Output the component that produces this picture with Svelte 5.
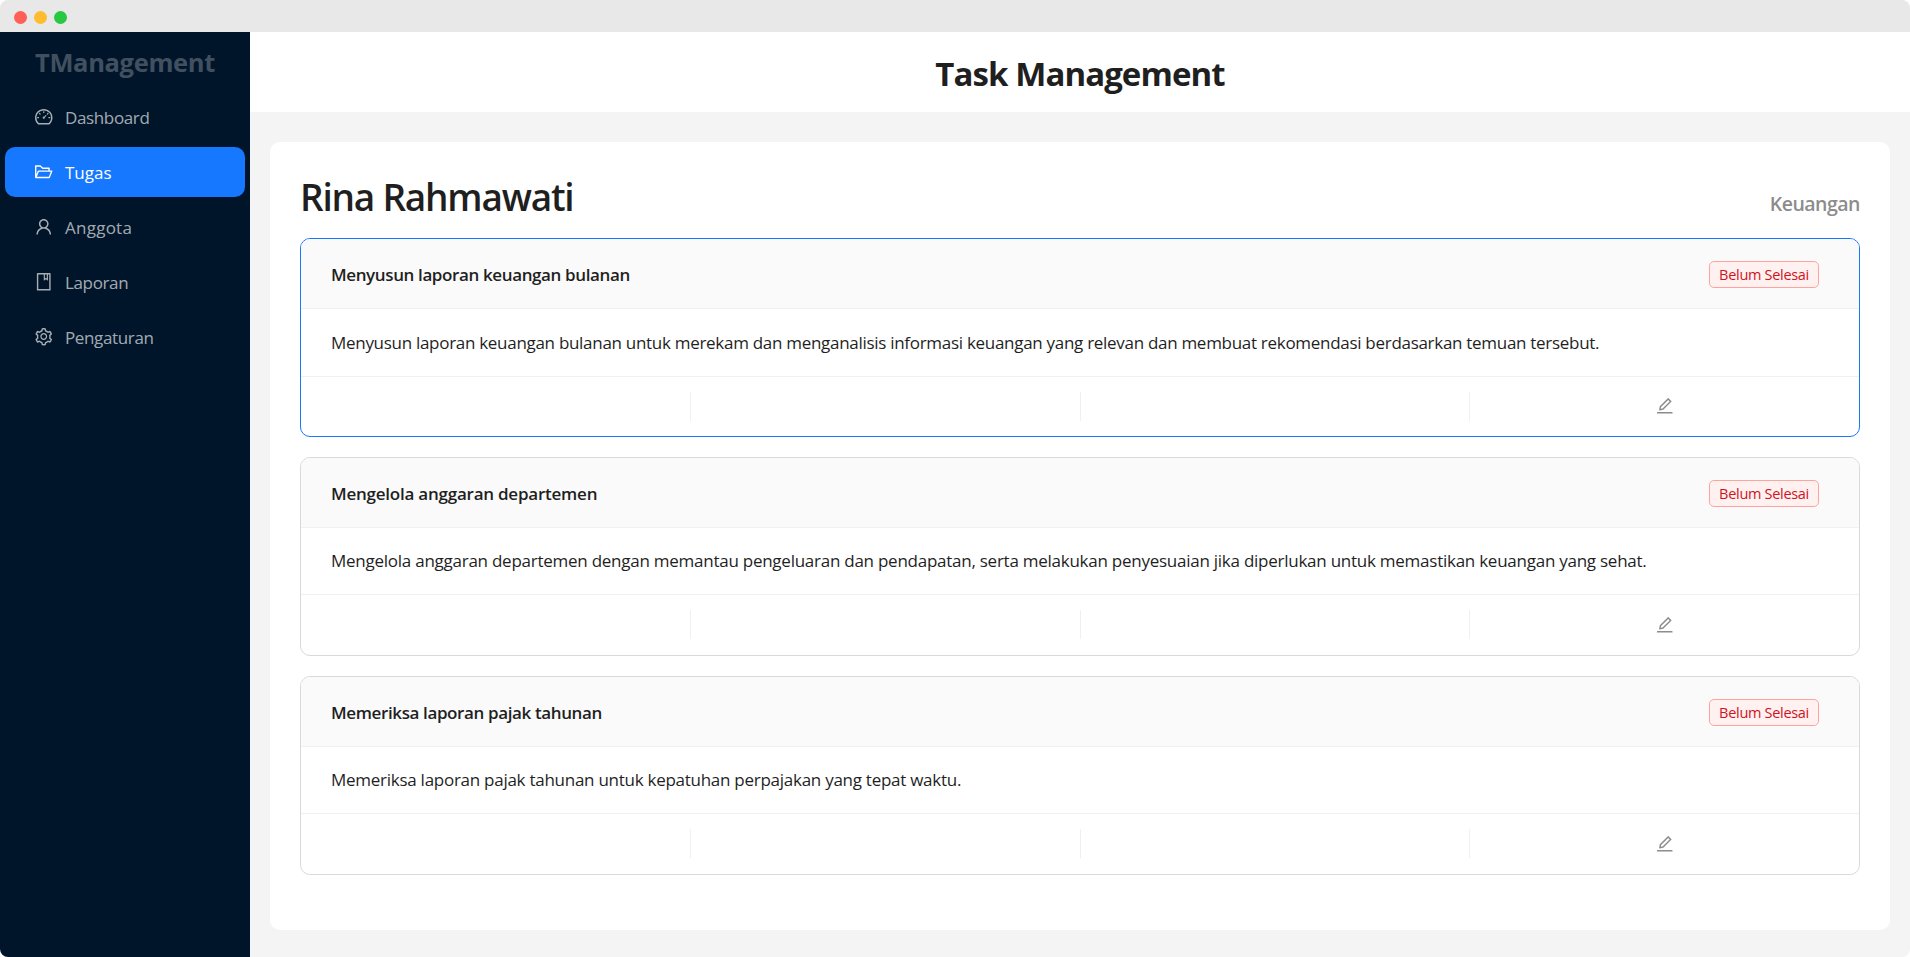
<script>
  const icons = {
    dashboard: 'M924.8 385.6a446.7 446.7 0 00-96-142.4 446.7 446.7 0 00-142.4-96C631.1 123.8 572.5 112 512 112s-119.1 11.8-174.4 35.2a446.7 446.7 0 00-142.4 96 446.7 446.7 0 00-96 142.4C75.8 440.9 64 499.5 64 560c0 132.7 58.3 257.7 159.9 343.1l1.7 1.4c5.8 4.8 13.1 7.5 20.6 7.5h531.7c7.5 0 14.8-2.7 20.6-7.5l1.7-1.4C901.7 817.7 960 692.7 960 560c0-60.5-11.9-119.1-35.2-174.4zM761.4 836H262.6A371.12 371.12 0 01140 560c0-99.4 38.7-192.8 109-263 70.3-70.3 163.7-109 263-109 99.4 0 192.8 38.7 263 109 70.3 70.3 109 163.7 109 263 0 105.6-44.5 205.5-122.6 276zM623.5 421.5a8.03 8.03 0 00-11.3 0L527.7 506c-18.7-5-39.4-.2-54.1 14.5a55.95 55.95 0 000 79.2 55.95 55.95 0 0079.2 0 55.87 55.87 0 0014.5-54.1l84.5-84.5c3.1-3.1 3.1-8.2 0-11.3l-28.3-28.3zM490 320h44c4.4 0 8-3.6 8-8v-80c0-4.4-3.6-8-8-8h-44c-4.4 0-8 3.6-8 8v80c0 4.4 3.6 8 8 8zm260 218v44c0 4.4 3.6 8 8 8h80c4.4 0 8-3.6 8-8v-44c0-4.4-3.6-8-8-8h-80c-4.4 0-8 3.6-8 8zm12.7-197.2l-31.1-31.1a8.03 8.03 0 00-11.3 0l-56.6 56.6a8.03 8.03 0 000 11.3l31.1 31.1c3.1 3.1 8.2 3.1 11.3 0l56.6-56.6c3.1-3.1 3.1-8.2 0-11.3zm-458.6-31.1a8.03 8.03 0 00-11.3 0l-31.1 31.1a8.03 8.03 0 000 11.3l56.6 56.6c3.1 3.1 8.2 3.1 11.3 0l31.1-31.1c3.1-3.1 3.1-8.2 0-11.3l-56.6-56.6zM262 530h-80c-4.4 0-8 3.6-8 8v44c0 4.4 3.6 8 8 8h80c4.4 0 8-3.6 8-8v-44c0-4.4-3.6-8-8-8z',
    folder: 'M928 444H820V330.4c0-17.7-14.3-32-32-32H473L355.7 186.2a8.15 8.15 0 00-5.5-2.2H96c-17.7 0-32 14.3-32 32v592c0 17.7 14.3 32 32 32h698c13 0 24.8-7.9 29.7-20l134-332c1.5-3.8 2.3-7.9 2.3-12 0-17.7-14.3-32-32-32zM136 256h188.5l119.6 114.4H748V444H238c-13 0-24.8 7.9-29.7 20L136 643.2V256zm635.3 512H159l103.3-256h612.4L771.3 768z',
    user: 'M858.5 763.6a374 374 0 00-80.6-119.5 375.63 375.63 0 00-119.5-80.6c-.4-.2-.8-.3-1.2-.5C719.5 518 760 444.7 760 362c0-137-111-248-248-248S264 225 264 362c0 82.7 40.5 156 102.8 201.1-.4.2-.8.3-1.2.5-44.8 18.9-85 46-119.5 80.6a375.63 375.63 0 00-80.6 119.5A371.7 371.7 0 00136 901.8a8 8 0 008 8.2h60c4.4 0 7.9-3.5 8-7.8 2-77.2 33-149.5 87.8-204.3 56.7-56.7 132-87.9 212.2-87.9s155.5 31.2 212.2 87.9C779 752.7 810 825 812 902.2c.1 4.4 3.6 7.8 8 7.8h60a8 8 0 008-8.2c-1-47.8-10.9-94.3-29.5-138.2zM512 534c-45.9 0-89.1-17.9-121.6-50.4S340 407.9 340 362c0-45.9 17.9-89.1 50.4-121.6S466.1 190 512 190s89.1 17.9 121.6 50.4S684 316.1 684 362c0 45.9-17.9 89.1-50.4 121.6S557.9 534 512 534z',
    book: 'M832 64H192c-17.7 0-32 14.3-32 32v832c0 17.7 14.3 32 32 32h640c17.7 0 32-14.3 32-32V96c0-17.7-14.3-32-32-32zm-260 72h96v209.9L621.5 312 572 347.4V136zm220 752H232V136h280v296.9c0 3.3 1 6.6 3 9.3a15.9 15.9 0 0022.3 3.7l83.8-59.9 81.4 59.4c2.7 2 6 3.1 9.4 3.1 8.8 0 16-7.2 16-16V136h64v752z',
    setting: 'M924.8 625.7l-65.5-56c3.1-19 4.7-38.4 4.7-57.8s-1.6-38.8-4.7-57.8l65.5-56a32.03 32.03 0 009.3-35.2l-.9-2.6a443.74 443.74 0 00-79.7-137.9l-1.8-2.1a32.12 32.12 0 00-35.1-9.5l-81.3 28.9c-30-24.6-63.5-44-99.7-57.6l-15.7-85a32.05 32.05 0 00-25.8-25.7l-2.7-.5c-52.1-9.4-106.9-9.4-159 0l-2.7.5a32.05 32.05 0 00-25.8 25.7l-15.8 85.4a351.86 351.86 0 00-99 57.4l-81.9-29.1a32 32 0 00-35.1 9.5l-1.8 2.1a446.02 446.02 0 00-79.7 137.9l-.9 2.6c-4.5 12.5-.8 26.5 9.3 35.2l66.3 56.6c-3.1 18.8-4.6 38-4.6 57.1 0 19.2 1.5 38.4 4.6 57.1L99 625.5a32.03 32.03 0 00-9.3 35.2l.9 2.6c18.1 50.4 44.9 96.9 79.7 137.9l1.8 2.1a32.12 32.12 0 0035.1 9.5l81.9-29.1c29.8 24.5 63.1 43.9 99 57.4l15.8 85.4a32.05 32.05 0 0025.8 25.7l2.7.5a449.4 449.4 0 00159 0l2.7-.5a32.05 32.05 0 0025.8-25.7l15.7-85a350 350 0 0099.7-57.6l81.3 28.9a32 32 0 0035.1-9.5l1.8-2.1c34.8-41.1 61.6-87.5 79.7-137.9l.9-2.6c4.5-12.3.8-26.3-9.3-35zM788.3 465.9c2.5 15.1 3.8 30.6 3.8 46.1s-1.3 31-3.8 46.1l-6.6 40.1 74.7 63.9a370.03 370.03 0 01-42.6 73.6L721 702.8l-31.4 25.8c-23.9 19.6-50.5 35-79.3 45.8l-38.1 14.3-17.9 97a377.5 377.5 0 01-85 0l-17.9-97.2-37.8-14.5c-28.5-10.8-55-26.2-78.7-45.7l-31.4-25.9-93.4 33.2c-17-22.9-31.2-47.6-42.6-73.6l75.5-64.5-6.5-40c-2.4-14.9-3.7-30.3-3.7-45.5 0-15.3 1.2-30.6 3.7-45.5l6.5-40-75.5-64.5c11.3-26.1 25.6-50.7 42.6-73.6l93.4 33.2 31.4-25.9c23.7-19.5 50.2-34.9 78.7-45.7l37.9-14.3 17.9-97.2c28.1-3.2 56.8-3.2 85 0l17.9 97 38.1 14.3c28.7 10.8 55.4 26.2 79.3 45.8l31.4 25.8 92.8-32.9c17 22.9 31.2 47.6 42.6 73.6L781.8 426l6.5 39.9zM512 326c-97.2 0-176 78.8-176 176s78.8 176 176 176 176-78.8 176-176-78.8-176-176-176zm79.2 255.2A111.6 111.6 0 01512 614c-29.9 0-58-11.7-79.2-32.8A111.6 111.6 0 01400 502c0-29.9 11.7-58 32.8-79.2C454 401.6 482.1 390 512 390c29.9 0 58 11.6 79.2 32.8A111.6 111.6 0 01624 502c0 29.9-11.7 58-32.8 79.2z',
    edit: 'M257.7 752c2 0 4-.2 6-.5L431.9 722c2-.4 3.9-1.3 5.3-2.8l423.9-423.9a9.96 9.96 0 000-14.1L694.9 114.9c-1.9-1.9-4.4-2.9-7.1-2.9s-5.2 1-7.1 2.9L256.8 538.8c-1.5 1.5-2.4 3.3-2.8 5.3l-29.5 168.2a33.5 33.5 0 009.4 29.8c6.6 6.4 14.9 9.9 23.8 9.9zm67.4-174.4L687.8 215l73.3 73.3-362.7 362.6-88.9 15.7 15.6-89zM880 836H144c-17.7 0-32 14.3-32 32v36c0 4.4 3.6 8 8 8h784c4.4 0 8-3.6 8-8v-36c0-17.7-14.3-32-32-32z'
  };

  const menu = [
    { icon: 'dashboard', label: 'Dashboard' },
    { icon: 'folder', label: 'Tugas' },
    { icon: 'user', label: 'Anggota' },
    { icon: 'book', label: 'Laporan' },
    { icon: 'setting', label: 'Pengaturan' }
  ];
  let current = $state('Tugas');

  const tasks = [
    {
      title: 'Menyusun laporan keuangan bulanan',
      text: 'Menyusun laporan keuangan bulanan untuk merekam dan menganalisis informasi keuangan yang relevan dan membuat rekomendasi berdasarkan temuan tersebut.'
    },
    {
      title: 'Mengelola anggaran departemen',
      text: 'Mengelola anggaran departemen dengan memantau pengeluaran dan pendapatan, serta melakukan penyesuaian jika diperlukan untuk memastikan keuangan yang sehat.'
    },
    {
      title: 'Memeriksa laporan pajak tahunan',
      text: 'Memeriksa laporan pajak tahunan untuk kepatuhan perpajakan yang tepat waktu.'
    }
  ];
  let selected = $state(0);
</script>

{#snippet icon(name)}
  <svg class="icon" viewBox="64 64 896 896" aria-hidden="true"><path d={icons[name]} /></svg>
{/snippet}

<div class="window">
  <div class="titlebar"><i class="red"></i><i class="yellow"></i><i class="green"></i></div>
  <div class="layout">
    <aside>
      <div class="brand">TManagement</div>
      <nav>
        {#each menu as m}
          <button class="item" class:active={current === m.label} onclick={() => (current = m.label)}>
            {@render icon(m.icon)}<span>{m.label}</span>
          </button>
        {/each}
      </nav>
    </aside>
    <div class="page">
      <header><h1>Task Management</h1></header>
      <main>
        <section class="panel">
          <div class="person">
            <h2>Rina Rahmawati</h2>
            <span class="dept">Keuangan</span>
          </div>
          <div class="tasks">
            {#each tasks as task, i}
              <article class:selected={selected === i}>
                <div class="head">
                  <h3>{task.title}</h3>
                  <span class="tag">Belum Selesai</span>
                </div>
                <div class="body">{task.text}</div>
                <ul>
                  <li></li><li></li><li></li>
                  <li><button class="edit" aria-label="Edit" onclick={() => (selected = i)}>{@render icon('edit')}</button></li>
                </ul>
              </article>
            {/each}
          </div>
        </section>
      </main>
    </div>
  </div>
</div>

<style>
  :global(body) { margin: 0; background: #fff; }
  * { box-sizing: border-box; }
  .window {
    width: 100%; height: 957px; display: flex; flex-direction: column; overflow: hidden;
    border-radius: 8px; color: #1f1f1f;
    font: 17px/27.5px 'Segoe UI', 'Open Sans', 'Noto Sans', sans-serif;
  }
  button { font: inherit; color: inherit; background: none; border: 0; padding: 0; cursor: pointer; }
  h1, h2, h3 { margin: 0; }
  .icon { width: 17.5px; height: 17.5px; flex: none; display: block; fill: currentColor; }

  .titlebar { flex: 0 0 32px; background: #e8e8e8; display: flex; align-items: center; gap: 7px; padding: 2px 13.5px 0; }
  .titlebar i { width: 13px; height: 13px; border-radius: 50%; }
  .red { background: #ff5f57; }
  .yellow { background: #febc2e; }
  .green { background: #28c840; }

  .layout { flex: 1; display: flex; min-height: 0; }
  aside { width: 250px; background: #001529; flex: none; }
  .brand {
    height: 60px; display: flex; align-items: center; padding: 2px 0 0 35px;
    color: #405060; font-size: 25.5px; font-weight: 700; letter-spacing: -.35px;
  }
  nav { display: flex; flex-direction: column; gap: 5px; padding: 0 5px; }
  .item {
    height: 50px; display: flex; align-items: center; gap: 12.5px; padding-left: 30px;
    border-radius: 10px; color: rgba(255, 255, 255, .65); text-align: left; letter-spacing: -.36px;
  }
  .item span { padding-top: 2px; }
  .item:nth-child(2) { letter-spacing: 0; }
  .item:nth-child(3) { letter-spacing: .25px; }
  .item.active { background: #1677ff; color: #fff; }

  .page { flex: 1; display: flex; flex-direction: column; background: #f4f4f4; min-width: 0; }
  header { height: 80px; background: #fff; display: flex; align-items: center; justify-content: center; padding-top: 4px; }
  h1 { font-size: 33px; line-height: 44px; font-weight: 700; letter-spacing: -.93px; }
  main { flex: 1; padding: 30px 20px 27px; display: flex; }
  .panel { flex: 1; min-width: 0; background: #fff; border-radius: 10px; padding: 30px; }
  .person { height: 66px; display: flex; justify-content: space-between; align-items: baseline; }
  h2 { font-size: 37px; line-height: 50px; font-weight: 600; letter-spacing: -1.22px; }
  .dept { font-size: 19.5px; font-weight: 600; color: #8c8c8c; letter-spacing: -.5px; }

  .tasks { display: flex; flex-direction: column; gap: 20px; }
  article { height: 199px; border: 1px solid #d9d9d9; border-radius: 10px; display: flex; flex-direction: column; overflow: hidden; }
  article.selected { border-color: #1677ff; }
  .head {
    flex: 0 0 70px; padding: 2px 40px 0 30px; background: #fafafa; border-bottom: 1px solid #f0f0f0;
    display: flex; align-items: center; justify-content: space-between;
  }
  h3 { font-size: 17px; font-weight: 600; letter-spacing: -.38px; }
  .tag {
    height: 27px; line-height: 25px; padding: 0 9px; font-size: 14.5px; white-space: nowrap; letter-spacing: -.3px;
    color: #cf1322; background: #fff1f0; border: 1px solid #ffa39e; border-radius: 5px;
  }
  .body { flex: 0 0 66px; padding: 0 30px; display: flex; align-items: center; white-space: nowrap; letter-spacing: -.265px; }
  article:first-child .body { flex-basis: 67px; letter-spacing: -.292px; }
  article:nth-child(2) .body { letter-spacing: -.252px; }
  article:nth-child(2) h3 { letter-spacing: -.23px; }
  ul { flex: 1; list-style: none; margin: 0; padding: 15px 0; display: flex; border-top: 1px solid #f0f0f0; }
  li { flex: 1; height: 29px; border-right: 1px solid #f0f0f0; display: flex; align-items: center; justify-content: center; }
  li:last-child { border: 0; }
  article:first-child li:last-child { padding-bottom: 1px; }
  .edit { color: #8c8c8c; }
</style>
